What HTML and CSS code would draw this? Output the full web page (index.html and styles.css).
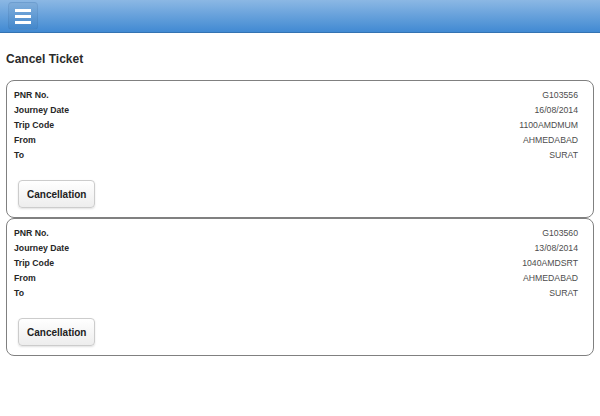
FILE: index.html
```html
<!DOCTYPE html>
<html lang="en">
  <head>
    <meta charset="utf-8" />
    <title>Cancel Ticket</title>
    <link rel="stylesheet" href="styles.css">
  </head>
  <body>
    <header class="topbar">
      <button class="menuButton" type="button" aria-label="Menu">
        <span></span><span></span><span></span>
      </button>
    </header>
    <main class="page">
      <h1>Cancel Ticket</h1>
      <div class="ticket">
        <div class="row"><b>PNR No.</b><span>G103556</span></div>
        <div class="row"><b>Journey Date</b><span>16/08/2014</span></div>
        <div class="row"><b>Trip Code</b><span>1100AMDMUM</span></div>
        <div class="row"><b>From</b><span>AHMEDABAD</span></div>
        <div class="row"><b>To</b><span>SURAT</span></div>
        <button class="cancelButton" type="button">Cancellation</button>
      </div>
      <div class="ticket">
        <div class="row"><b>PNR No.</b><span>G103560</span></div>
        <div class="row"><b>Journey Date</b><span>13/08/2014</span></div>
        <div class="row"><b>Trip Code</b><span>1040AMDSRT</span></div>
        <div class="row"><b>From</b><span>AHMEDABAD</span></div>
        <div class="row"><b>To</b><span>SURAT</span></div>
        <button class="cancelButton" type="button">Cancellation</button>
      </div>
    </main>
  </body>
</html>
```

FILE: styles.css
```css
* {
  box-sizing: border-box;
  font-family: "Liberation Sans", Arial, sans-serif;
}
body {
  margin: 0;
  background-color: white;
  color: hsl(0, 0%, 20%);
}
.topbar {
  display: flex;
  align-items: flex-start;
  height: 33px;
  padding: 2px 8px;
  border-bottom: 1px solid hsl(210, 55%, 45%);
  background: linear-gradient(hsl(210, 62%, 72%), hsl(210, 62%, 54%));
}
.menuButton {
  display: flex;
  flex-direction: column;
  justify-content: center;
  gap: 3px;
  width: 30px;
  height: 28px;
  padding: 0 6px;
  border: 1px solid hsla(210, 50%, 40%, 0.15);
  border-radius: 4px;
  background: linear-gradient(hsla(210, 40%, 60%, 0.25), hsla(210, 60%, 40%, 0.15));
  cursor: pointer;
}
.menuButton span {
  display: block;
  height: 3px;
  background-color: white;
}
.page {
  padding: 0 6px;
}
h1 {
  margin: 19px 0 14px;
  font-size: 12px;
  line-height: 14px;
  color: hsl(0, 0%, 17%);
}
.ticket {
  display: flex;
  flex-direction: column;
  padding: 7px 15px 9px 7px;
  border: 1px solid hsl(0, 0%, 50%);
  border-radius: 8px;
}
.row {
  display: flex;
  justify-content: space-between;
  font-size: 8.7px;
  line-height: 15px;
}
.row b {
  color: hsl(0, 0%, 15%);
}
.row span {
  color: hsl(0, 0%, 30%);
}
.cancelButton {
  align-self: flex-start;
  height: 28px;
  margin: 17px 0 0 4px;
  padding: 0 8px;
  border: 1px solid hsl(0, 0%, 80%);
  border-radius: 4px;
  background: linear-gradient(white, hsl(0, 0%, 93%));
  box-shadow: 0 1px 2px hsla(0, 0%, 0%, 0.12);
  color: hsl(0, 0%, 13%);
  font-size: 10px;
  font-weight: bold;
  cursor: pointer;
}
```
